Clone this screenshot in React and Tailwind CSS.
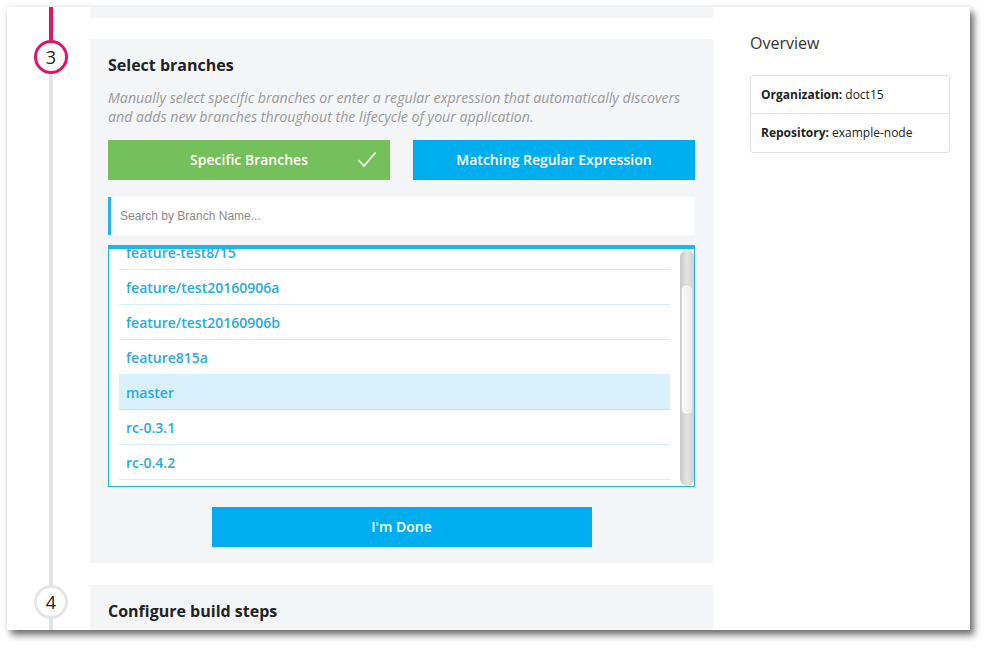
import React from "react";

const branches = [
  "feature-test8/15",
  "feature/test20160906a",
  "feature/test20160906b",
  "feature815a",
  "master",
  "rc-0.3.1",
  "rc-0.4.2",
];

function BranchList() {
  return (
    <div className="mt-[10px] h-[242px] border border-t-4 border-[#1fb5ef] bg-white flex pl-[10px] gap-[10px] overflow-hidden">
      <div className="flex-1 overflow-hidden">
        <div className="-mt-[14px]">
          {branches.map((b) => (
            <div
              key={b}
              className={
                "h-[35px] flex items-center pl-[7px] border-b text-[14px] font-semibold text-[#29abe2] " +
                (b === "master"
                  ? "bg-[#d9f1fb] border-[#b9e4f6]"
                  : "border-[#d6eff9]")
              }
            >
              {b}
            </div>
          ))}
        </div>
      </div>
      <div className="w-[14px] mt-[1px] rounded-full bg-gradient-to-r from-[#c9c9c9] via-[#e4e4e4] to-[#cfcfcf] relative">
        <div className="absolute left-[1px] right-[1px] top-[34px] h-[131px] rounded-full bg-gradient-to-r from-[#fbfbfb] to-[#ececec] border border-[#d8d8d8]" />
      </div>
    </div>
  );
}

export default function App() {
  return (
    <div className="w-[993px] h-[653px] bg-white pt-[7px] pl-[7px]" style={{ fontFamily: '"Open Sans", sans-serif' }}>
      <div className="w-[963px] h-[623px] bg-white flex overflow-hidden shadow-[0_0_6px_rgba(0,0,0,0.08),4px_5px_7px_rgba(0,0,0,0.55)]">
        {/* timeline */}
        <div className="w-[83px] shrink-0">
          <div className="ml-[27px] w-[34px] h-full flex flex-col items-center">
            <div className="w-[4px] h-[33px] bg-[#e0136c]" />
            <div className="w-[34px] h-[34px] rounded-full border-[3px] border-[#e0136c] bg-white flex items-center justify-center text-[18px] text-[#222]">
              3
            </div>
            <div className="w-[4px] h-[511px] bg-[#e3e3e6]" />
            <div className="w-[34px] h-[34px] rounded-full border-[3px] border-[#e5e5e7] bg-white flex items-center justify-center text-[18px] text-[#222]">
              4
            </div>
            <div className="w-[4px] flex-1 bg-[#e3e3e6]" />
          </div>
        </div>

        {/* main column */}
        <div className="w-[623px] shrink-0 flex flex-col">
          <div className="h-[11px] bg-[#f4f5f7]" />
          <div className="mt-[21px] h-[524px] bg-[#f4f5f7] px-[18px] pt-[15px]">
            <div className="text-[16px] leading-[22px] font-bold text-[#222]">Select branches</div>
            <p className="mt-[12px] text-[14.2px] leading-[19px] italic text-[#9a9a9a]">
              Manually select specific branches or enter a regular expression that automatically discovers and adds new branches throughout the lifecycle of your application.
            </p>
            <div className="mt-[14px] flex justify-between">
              <button className="relative w-[282px] h-[40px] pb-[1px] bg-[#74c05b] text-white text-[14px] font-semibold">
                Specific Branches
                <svg className="absolute right-[13px] top-[11px]" width="20" height="17" viewBox="0 0 20 17" fill="none">
                  <path d="M1.5 9 L7 15 L18.5 1.5" stroke="white" strokeWidth="1.6" />
                </svg>
              </button>
              <button className="w-[282px] h-[40px] pb-[1px] bg-[#00aeef] text-white text-[14px] font-semibold">
                Matching Regular Expression
              </button>
            </div>
            <div className="mt-[17px] h-[38px] bg-white border-l-[3px] border-[#1fb5ef] flex items-center pl-[9px]">
              <input
                className="w-full outline-none text-[12px] placeholder-[#8a8a8a] bg-transparent"
                style={{ fontFamily: '"Liberation Sans", Arial, sans-serif' }}
                placeholder="Search by Branch Name..."
              />
            </div>
            <BranchList />
            <div className="mt-[20px] flex justify-center">
              <button className="w-[380px] h-[40px] pb-[1px] bg-[#00aeef] text-white text-[14px] font-semibold">
                I'm Done
              </button>
            </div>
          </div>
          <div className="mt-[22px] flex-1 bg-[#f4f5f7] px-[18px] pt-[15px]">
            <div className="text-[16px] leading-[22px] font-bold text-[#222]">Configure build steps</div>
          </div>
        </div>

        {/* overview */}
        <div className="flex-1 pl-[37px] pr-[20px] pt-[24px]">
          <div className="text-[16px] leading-[24px] text-[#333]">Overview</div>
          <div className="mt-[20px] w-[200px] border border-[#e2e2e2] rounded-[3px] text-[12px] text-[#222]">
            <div className="h-[38px] flex items-center px-[10px] border-b border-[#e2e2e2]">
              <span className="font-bold">Organization:</span>
              <span className="ml-[3px]">doct15</span>
            </div>
            <div className="h-[38px] flex items-center px-[10px]">
              <span className="font-bold">Repository:</span>
              <span className="ml-[3px]">example-node</span>
            </div>
          </div>
        </div>
      </div>
    </div>
  );
}
